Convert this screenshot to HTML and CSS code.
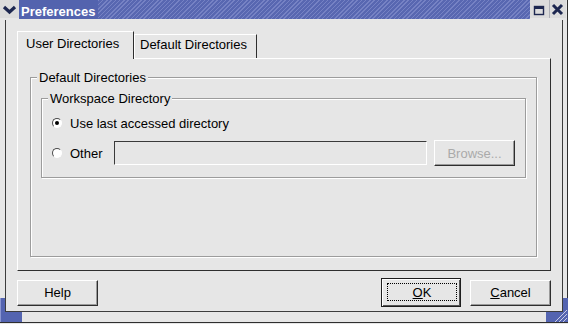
FILE: index.html
```html
<html>
  <head>
    <title>Preferences</title>
    <link rel="stylesheet" href="styles.css">
  </head>
  <body>
    <div class="window">
      <div class="titlebar">
        <div class="tb-btn menu">
          <svg width="19" height="18" viewBox="0 0 19 18"><polyline points="4,7 9.5,12 15,7" fill="none" stroke="#1d2750" stroke-width="3.2"/></svg>
        </div>
        <div class="title"><span>Preferences</span></div>
        <div class="tb-btn max">
          <svg width="19" height="18" viewBox="0 0 19 18"><rect x="4.5" y="6.5" width="9" height="8" fill="none" stroke="#1d2750" stroke-width="1.4"/><rect x="4" y="6" width="10" height="3" fill="#1d2750"/></svg>
        </div>
        <div class="tb-btn close">
          <svg width="16" height="18" viewBox="0 0 16 18"><path d="M3 5 L12 14 M12 5 L3 14" stroke="#1d2750" stroke-width="3"/></svg>
        </div>
      </div>
      <div class="client">
        <div class="tabs">
          <div class="tab active">User Directories</div>
          <div class="tab">Default Directories</div>
        </div>
        <div class="panel">
          <fieldset class="frame outer">
            <legend>Default Directories</legend>
            <fieldset class="frame inner">
              <legend>Workspace Directory</legend>
              <div class="row">
                <span class="radio checked"></span>
                <span>Use last accessed directory</span>
              </div>
              <div class="row second">
                <span class="radio"></span>
                <span>Other</span>
                <input class="entry" disabled>
                <button class="btn browse" disabled>Browse...</button>
              </div>
            </fieldset>
          </fieldset>
        </div>
        <div class="actions">
          <button class="btn help">Help</button>
          <button class="btn ok"><span class="focus"><u>O</u>K</span></button>
          <button class="btn cancel"><u>C</u>ancel</button>
        </div>
      </div>
      <svg class="grip grip-left" width="22" height="25" viewBox="0 0 22 25">
        <path d="M0 0 H5 V14 H22 V24 H0 Z" fill="#5464b0"/>
        <path d="M0 0 H1 V24 H0 Z" fill="#8b96d2"/>
      </svg>
      <svg class="grip grip-right" width="22" height="25" viewBox="0 0 22 25">
        <path d="M17 0 H22 V24 H0 V14 H17 Z" fill="#5464b0"/>
        <path d="M9 24 L21 12 M13 24 L21 16 M17 24 L21 20" stroke="#c8cce6" stroke-width="1"/>
      </svg>
    </div>
  </body>
</html>
```
FILE: styles.css
```css
* {
  box-sizing: border-box;
}
body {
  margin: 0;
  background: #e6e6e6;
  font-family: "Liberation Sans", Arial, sans-serif;
  font-size: 13px;
  line-height: 15px;
  color: #000;
  overflow: hidden;
}
.window {
  position: relative;
  width: 568px;
  height: 323px;
  border-right: 1px solid #2e2e2e;
  border-bottom: 1px solid #2e2e2e;
}
.titlebar {
  display: flex;
  height: 19px;
  padding-right: 1px;
}
.tb-btn {
  height: 18px;
  background: #dcdcdc;
  display: flex;
  align-items: center;
  justify-content: center;
}
.menu {
  width: 19px;
}
.max {
  width: 20px;
  border-right: 1px solid #aeb0b8;
}
.close {
  width: 16px;
}
.title {
  flex: 1;
  background: repeating-linear-gradient(135deg, #5867b1 0 2px, #7682c4 2px 3px);
}
.title span {
  display: inline-block;
  height: 19px;
  padding: 4px 3px 0 2px;
  background: #5363ae;
  color: #fff;
  font-weight: bold;
}
.client {
  height: 292px;
  margin: 1px 4px 0 5px;
  border: 1px solid #3c3c3c;
  border-top: none;
  padding: 11px 11px 4px 11px;
  display: flex;
  flex-direction: column;
}
.tabs {
  display: flex;
  align-items: flex-end;
  height: 27px;
}
.tab {
  width: 123px;
  height: 24px;
  border-top: 1px solid #fff;
  border-left: 1px solid #fff;
  border-right: 1px solid #2e2e2e;
  padding: 2px 0 0 5px;
}
.tab.active {
  width: 117px;
  height: 28px;
  margin-bottom: -1px;
  padding: 4px 0 0 8px;
  position: relative;
  z-index: 1;
  background: #e6e6e6;
}
.panel {
  flex: 1;
  border: 1px solid;
  border-color: #fff #2e2e2e #2e2e2e #fff;
  padding: 11px 13px 13px 12px;
  display: flex;
  flex-direction: column;
}
.frame {
  margin: 0;
  min-width: 0;
  border: 1px solid #9c9c9c;
  box-shadow: inset 1px 1px 0 #fff, 1px 1px 0 #fff;
}
.frame legend {
  padding: 0 2px;
  margin-left: -4px;
  background: #e6e6e6;
}
.outer {
  flex: 1;
  padding: 6px 10px 0 10px;
}
.inner {
  padding: 8px 10px 11px 10px;
}
.row {
  display: flex;
  align-items: center;
  height: 18px;
}
.row.second {
  height: 26px;
  margin-top: 8px;
}
.radio {
  flex: none;
  position: relative;
  width: 10px;
  height: 10px;
  margin-right: 8px;
  border-radius: 50%;
  border: 1px solid;
  border-color: #4a4a4a #fff #fff #4a4a4a;
  background: #fff;
}
.radio.checked::after {
  content: "";
  position: absolute;
  left: 2px;
  top: 2px;
  width: 4px;
  height: 4px;
  border-radius: 50%;
  background: #000;
}
.entry {
  flex: 1;
  min-width: 0;
  height: 24px;
  margin: 0 0 0 11px;
  padding: 0;
  border: 1px solid;
  border-color: #3a3a3a #fff #fff #3a3a3a;
  background: #e6e6e6;
}
.btn {
  font: inherit;
  color: #000;
  height: 26px;
  padding: 0;
  background: #e6e6e6;
  border: 1px solid;
  border-color: #fff #2e2e2e #2e2e2e #fff;
  box-shadow: inset -1px -1px 0 #9a9a9a;
}
.browse {
  flex: none;
  width: 81px;
  margin-left: 7px;
  color: #aaa;
}
.actions {
  display: flex;
  align-items: center;
  height: 29px;
  margin-top: 7px;
}
.help {
  width: 81px;
}
.ok {
  width: 80px;
  height: 29px;
  margin-left: auto;
  padding: 4px 3px 5px 5px;
  display: flex;
  border: 1px solid #1e1e1e;
  box-shadow: inset 1px 1px 0 #fff, inset -1px -1px 0 #555;
}
.focus {
  flex: 1;
  display: flex;
  align-items: center;
  justify-content: center;
  border: 1px dotted #000;
}
.cancel {
  width: 81px;
  margin-left: 9px;
}
.grip {
  position: absolute;
  top: 298px;
}
.grip-left {
  left: 0;
}
.grip-right {
  left: 546px;
}
```
